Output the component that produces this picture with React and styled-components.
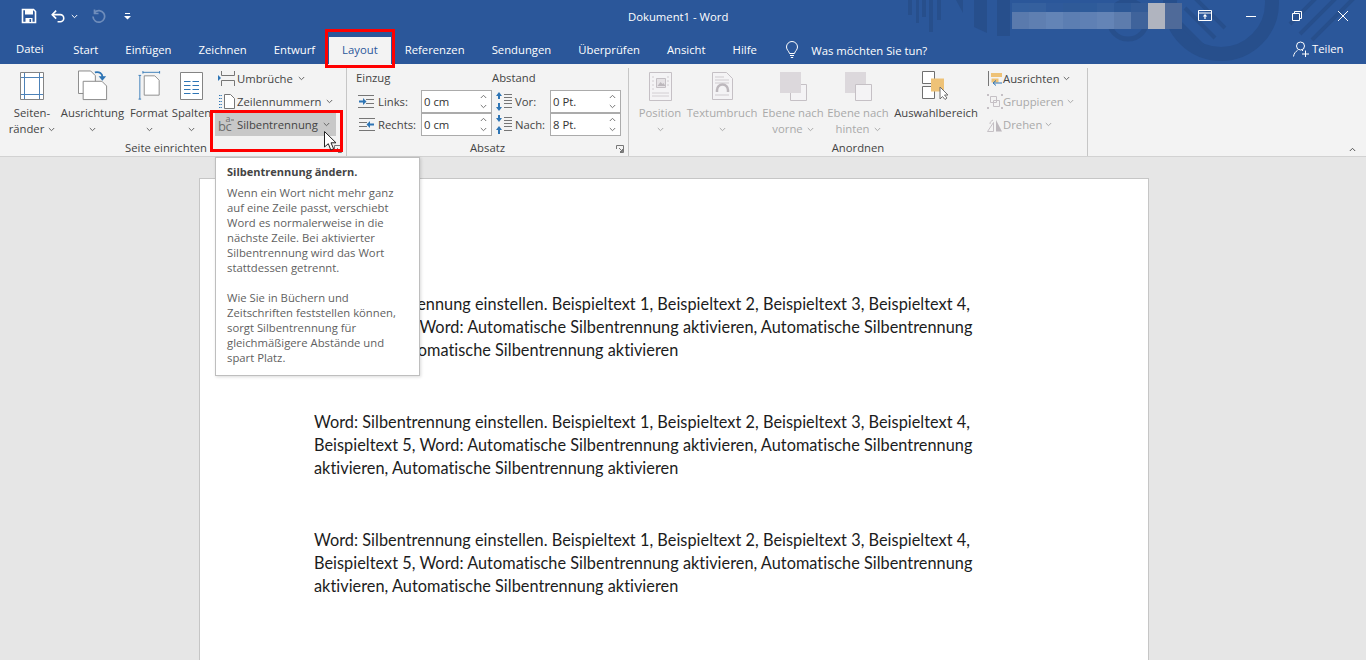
import React from "react";
import styled, { createGlobalStyle } from "styled-components";

const GlobalStyle = createGlobalStyle`
  html, body {
    margin: 0;
    height: 660px;
    overflow: hidden;
    background: #e6e6e6;
    font-family: "Open Sans", "Liberation Sans", sans-serif;
  }
  * { box-sizing: border-box; }
`;

// Small chevron used on all the dropdown buttons
const Chev = ({ color = "#666", up }) => (
  <svg width="7" height="5" viewBox="0 0 7 5" style={{ flex: "none", transform: up ? "rotate(180deg)" : "none" }}>
    <path d="M.8 1l2.7 2.7L6.2 1" fill="none" stroke={color} strokeWidth="1" />
  </svg>
);

const TitleDecor = () => (
  <DecorSvg viewBox="0 0 466 64" width="466" height="64">
    <g fill="#274f8c">
      <path d="M8 0h4v15H8zM16 0h3v23h-3zM22 0h4v17h-4zM29 0h4v32h-4zM37 0h4v20h-4z" />
      <path d="M56 0h7v13zM74 0h13v33l-13-6zM97 0h13v36H97z" />
    </g>
    <circle cx="228" cy="20" r="19" fill="none" stroke="#274f8c" strokeWidth="5" />
    <circle cx="321" cy="3" r="51" fill="none" stroke="#274f8c" strokeWidth="14" />
    <g stroke="#274f8c" strokeWidth="4">
      <path d="M275 18l28 28M285 8l30 30M295 -2l30 30M390 24l30-30M400 34l36-36M412 40l44-44" />
    </g>
  </DecorSvg>
);

const blurTiles = [
  ["#34609f", "#5a7aad"], ["#35609e", "#5f7fb1"], ["#2f5a9b", "#6384b6"], ["#2f5a98", "#5c7eb2"],
  ["#2e5b9a", "#5f80b4"], ["#335e9c", "#6484b6"], ["#2d5896", "#5d7cad"], ["#335b97", "#3f639b"],
  ["#b0b4bf", "#b0b4bf"], ["#4f6a99", "#4f6a99"],
];

const TitleBar = () => (
  <TitleRow>
    <TitleDecor />
    <Qat>
      <svg width="16" height="16" viewBox="0 0 16 16">
        <path d="M1.5 1.5h11l2 2v11h-13z" fill="none" stroke="#fff" strokeWidth="1.6" />
        <path d="M4 1.5h8v5H4zM4.5 10h7v4.5h-7z" fill="#fff" />
        <path d="M8.5 11h1.6v3H8.5z" fill="#2b579a" />
      </svg>
      <UndoWrap>
        <svg width="15" height="15" viewBox="0 0 16 15">
          <path d="M1.5 5.5h8.3a3.8 3.8 0 0 1 0 7.6H7" fill="none" stroke="#fff" strokeWidth="1.7" />
          <path d="M5.5 1.2L1.3 5.500l4.2 4.300" fill="none" stroke="#fff" strokeWidth="1.7" />
        </svg>
        <Chev color="#fff" />
      </UndoWrap>
      <RedoIcon width="15" height="15" viewBox="0 0 15 15">
        <path d="M3.500 3.500A5.800 5.800 0 1 1 2 7.500M3.500.500v4H7.500" fill="none" stroke="#6f8dbb" strokeWidth="1.700" />
      </RedoIcon>
      <svg width="7" height="7" viewBox="0 0 7 7">
        <path d="M1 0h5v1H1zM0 3h7L3.500 6.500z" fill="#fff" />
      </svg>
    </Qat>
    <DocTitle>Dokument1 - Word</DocTitle>
    <BlurStrip>
      {blurTiles.map((t, i) => (
        <BlurCol key={i}>
          <BlurTop $c={t[0]} />
          <BlurBottom $c={t[1]} />
        </BlurCol>
      ))}
    </BlurStrip>
    <WinButtons>
      <svg width="14" height="11" viewBox="0 0 14 11">
        <path d="M.5.500h13v10H.5zM.5 3h13" fill="none" stroke="#fff" />
        <path d="M7 4l2.300 2.400H7.600V9H6.400V6.400H4.700z" fill="#fff" />
      </svg>
      <svg width="10" height="10" viewBox="0 0 10 10">
        <path d="M0 5.500h10" stroke="#fff" />
      </svg>
      <svg width="10" height="10" viewBox="0 0 10 10">
        <path d="M.5 2.500h7v7h-7zM2.500 2.500v-2h7v7h-2" fill="none" stroke="#fff" />
      </svg>
      <svg width="10" height="10" viewBox="0 0 10 10">
        <path d="M0 0l10 10M10 0L0 10" stroke="#fff" />
      </svg>
    </WinButtons>
  </TitleRow>
);

const tabNames = ["Start", "Einfügen", "Zeichnen", "Entwurf"];
const tabNames2 = ["Referenzen", "Sendungen", "Überprüfen", "Ansicht", "Hilfe"];

const TabBar = () => (
  <TabRow>
    <FileTab>Datei</FileTab>
    {tabNames.map((t) => (
      <Tab key={t}>{t}</Tab>
    ))}
    <Tab $active>Layout</Tab>
    {tabNames2.map((t) => (
      <Tab key={t}>{t}</Tab>
    ))}
    <TellMe>
      <svg width="16" height="18" viewBox="0 0 16 18">
        <path d="M5.500 12.500C5 10 2.500 9 2.500 6a5.500 5.500 0 0 1 11 0c0 3-2.500 4-3 6.500zM6 14.500h4M6.800 16.500h2.400" fill="none" stroke="#fff" />
      </svg>
      Was möchten Sie tun?
    </TellMe>
    <Share>
      <svg width="16" height="16" viewBox="0 0 16 16">
        <circle cx="7.500" cy="5" r="4" fill="none" stroke="#fff" />
        <path d="M.5 15.500c.5-3 2-5 4-6M9 9.500h1M9 13h7M12.500 9.500v6.500" fill="none" stroke="#fff" />
      </svg>
      Teilen
    </Share>
  </TabRow>
);

const MarginsIcon = () => (
  <svg width="24" height="28" viewBox="0 0 24 28">
    <path d="M.5.500h23v27H.5z" fill="#fff" stroke="#848484" />
    <path d="M4.500 1v26M19.500 1v26M1 5.500h22M1 22.500h22" stroke="#4d82b8" />
  </svg>
);

const OrientationIcon = () => (
  <svg width="30" height="31" viewBox="0 0 32 32">
    <path d="M.5.500h13l5 5v19H.5z" fill="#fff" stroke="#848484" />
    <path d="M5.500 11.500h20l5 5v14.500h-25z" fill="#fff" stroke="#848484" />
    <path d="M18 2c5-1 8 1 8 5" fill="none" stroke="#2e75b5" strokeWidth="2" />
    <path d="M22 6h8l-4 5z" fill="#2e75b5" />
  </svg>
);

const SizeIcon = () => (
  <svg width="25" height="29" viewBox="0 0 25 33">
    <path d="M6.500 5.500h12l5 5v17h-17z" fill="#fff" stroke="#848484" />
    <path d="M5 1.500h19M5 0v3M24 0v3M1.500 5v27M0 5h3M0 32h3" stroke="#2e75b5" fill="none" />
  </svg>
);

const ColumnsIcon = () => (
  <svg width="23" height="28" viewBox="0 0 23 28">
    <path d="M.5.500h22v27H.5z" fill="#fff" stroke="#848484" />
    <path d="M4 9.500h6.500M12.500 9.500H19M4 13.500h6.500M12.500 13.500H19M4 17.500h6.500M12.500 17.500H19M4 21.500h6.500M12.500 21.500H19" stroke="#2e75b5" />
  </svg>
);

const BreaksIcon = () => (
  <svg width="17" height="15" viewBox="0 0 17 15">
    <path d="M3.500 0v4.500h13V0M3.500 15v-5.500h13V15" fill="none" stroke="#767676" />
    <path d="M0 4l3 3-3 3z" fill="#2e75b5" />
  </svg>
);

const LineNumbersIcon = () => (
  <svg width="17" height="15" viewBox="0 0 17 15">
    <path d="M6.500.500h6l4 4v10h-10z" fill="#fff" stroke="#767676" />
    <path d="M1 1.500h3M1 4.500h3M1 7.500h3M1 10.500h3M1 13.500h3" stroke="#2e75b5" strokeDasharray="1.500 .7" />
  </svg>
);

// The bc with a- above it, an icon made of real letters
const HyphenIcon = () => (
  <svg width="17" height="17" viewBox="0 0 17 17" fontFamily="Open Sans, sans-serif" fill="#6c6c6c">
    <text x="0" y="15" fontSize="13">b</text>
    <text x="7.500" y="15" fontSize="13">c</text>
    <text x="7.500" y="6" fontSize="9">a</text>
    <path d="M13 3.500h3v1h-3z" />
  </svg>
);

const IndentIcon = ({ right }) => (
  <svg width="17" height="14" viewBox="0 0 17 14" style={{ flex: "none", transform: right ? "scaleX(-1)" : "none" }}>
    <path d="M0 .500h16M8 4.500h8M8 8.500h8M0 12.500h16" stroke="#767676" />
    <path d="M1 5.500h4V3l3.500 3.500L5 10V7.500H1z" fill="#2e75b5" />
  </svg>
);

const SpacingIcon = ({ flip }) => (
  <svg width="17" height="20" viewBox="0 0 17 20" style={{ flex: "none" }}>
    <path d="M9 2.500h8M9 5.500h8M9 8.500h8M9 11.500h8M9 15.500h8" stroke="#767676" />
    {flip ? (
      <path d="M3 0h2v3h2L4 7 1 3h2zM3 19v-4H1l3-4 3 4H5v4z" fill="#2e75b5" />
    ) : (
      <path d="M4 0l3 4H5v3H3V4H1zM3 11h2v4h2l-3 4-3-4h2z" fill="#2e75b5" />
    )}
  </svg>
);

const PositionIcon = () => (
  <svg width="23" height="29" viewBox="0 0 23 29">
    <path d="M.5.500h22v28H.5z" fill="#f4f3f5" stroke="#c5c0c5" />
    <path d="M7.500 6.500h9v9h-9z" fill="#e6e3e6" stroke="#c5c0c5" />
    <path d="M8.500 14l3-4 2 2 1-1 2 3z" fill="#bdb8bd" />
    <path d="M3 5h2M3 9h2M3 13h2M3 17h2M3 21h17M3 24h17M18 5h2M18 9h2M18 13h2" stroke="#d2ced2" />
  </svg>
);

const WrapIcon = () => (
  <svg width="21" height="28" viewBox="0 0 21 28">
    <path d="M.5.500h14l6 6v21H.5z" fill="#f4f3f5" stroke="#c5c0c5" />
    <path d="M3 5h9M3 8h14M3 11h14M3 23h14" stroke="#cfcbcf" />
    <path d="M5 20v-2a5.500 5.500 0 0 1 11 0v2" fill="none" stroke="#bdb8bd" strokeWidth="2.500" />
  </svg>
);

const LayerIcon = ({ back }) => (
  <svg width="27" height="29" viewBox="0 0 27 29">
    {back ? (
      <>
        <path d="M0 0h21v21H0z" fill="#dcd8dc" />
        <path d="M10.500 12.500h16v16h-16z" fill="#f4f3f5" stroke="#c5c0c5" />
      </>
    ) : (
      <>
        <path d="M10.500 12.500h16v16h-16z" fill="#f4f3f5" stroke="#c5c0c5" />
        <path d="M0 0h21v21H0z" fill="#dcd8dc" />
      </>
    )}
  </svg>
);

const SelectionIcon = () => (
  <svg width="28" height="29" viewBox="0 0 28 29">
    <path d="M.5.500h12v12H.5zM.5 15.500h12v12H.5z" fill="#fff" stroke="#6f6f6f" />
    <path d="M9 7.500h13v13H9z" fill="#eec277" />
    <path d="M18 16v12l2.500-2.500 2.500 3 2-1.500-2.500-3H26z" fill="#fff" stroke="#6f6f6f" />
  </svg>
);

const AlignIcon = () => (
  <svg width="15" height="15" viewBox="0 0 15 15">
    <path d="M.5 0v15" stroke="#767676" />
    <path d="M3 2h11v4H3z" fill="#eec277" />
    <path d="M3.500 7.500h7v4h-7z" fill="#eec277" />
    <path d="M14 12H6M8 9.500L5 12l3 2.500" fill="none" stroke="#2e75b5" />
  </svg>
);

const GroupIcon = () => (
  <svg width="16" height="15" viewBox="0 0 16 15">
    <path d="M3.500 2.500h6v6h-6zM6.500 6.500h6v6h-6z" fill="none" stroke="#c5c0c5" />
    <path d="M0 0h2v2H0zM14 0h2v2h-2zM0 13h2v2H0zM14 13h2v2h-2z" fill="#c5c0c5" />
  </svg>
);

const RotateIcon = () => (
  <svg width="16" height="14" viewBox="0 0 16 14">
    <path d="M.5 13.500l6-9v9z" fill="none" stroke="#c5c0c5" />
    <path d="M9 2l6 11.500H9z" fill="#bdb8bd" />
    <path d="M3 6c0-2 1-3 3-4" fill="none" stroke="#c5c0c5" />
  </svg>
);

const Launcher = () => (
  <LauncherIcon width="8" height="8" viewBox="0 0 8 8">
    <path d="M.5 4V.5H7.500v7H4M3 3l3.500 3.500M6.500 4v2.500H4" fill="none" stroke="#777" />
  </LauncherIcon>
);

const Spinner = ({ value }) => (
  <SpinBox>
    <SpinValue>{value}</SpinValue>
    <SpinArrows>
      <Chev color="#777" up />
      <Chev color="#777" />
    </SpinArrows>
  </SpinBox>
);

const Ribbon = () => (
  <RibbonRow>
    <Group $width={347}>
      <GroupBody $left={5}>
        <BigButton $width={54}>
          <IconSlot $top={4}><MarginsIcon /></IconSlot>
          <BigLabel>Seiten-</BigLabel>
          <BigLabel>ränder <Chev /></BigLabel>
        </BigButton>
        <BigButton $width={67}>
          <IconSlot $top={2}><OrientationIcon /></IconSlot>
          <BigLabel>Ausrichtung</BigLabel>
          <BigLabel><Chev /></BigLabel>
        </BigButton>
        <BigButton $width={46}>
          <IconSlot $top={3}><SizeIcon /></IconSlot>
          <BigLabel>Format</BigLabel>
          <BigLabel><Chev /></BigLabel>
        </BigButton>
        <BigButton $width={39}>
          <IconSlot $top={4}><ColumnsIcon /></IconSlot>
          <BigLabel>Spalten</BigLabel>
          <BigLabel><Chev /></BigLabel>
        </BigButton>
        <SmallColumn $left={4}>
          <SmallButton $width={120} $gap={2}><BreaksIcon />Umbrüche <Chev /></SmallButton>
          <SmallButton $width={120} $gap={2}><LineNumbersIcon />Zeilennummern <Chev /></SmallButton>
          <SmallButton $width={121} $gap={2} $hover><HyphenIcon />Silbentrennung <Chev /></SmallButton>
        </SmallColumn>
      </GroupBody>
      <GroupLabel $shift={-7}>Seite einrichten</GroupLabel>
      <Launcher />
    </Group>

    <Group $width={282}>
      <ParaBody>
        <ParaColumn $width={136}>
          <ParaHead>Einzug</ParaHead>
          <ParaRow $left={2}>
            <IndentIcon /><ParaLabel $width={40}>Links:</ParaLabel>
            <Spinner value="0 cm" />
          </ParaRow>
          <ParaRow $left={2}>
            <IndentIcon right /><ParaLabel $width={40}>Rechts:</ParaLabel>
            <Spinner value="0 cm" />
          </ParaRow>
        </ParaColumn>
        <ParaColumn $width={129}>
          <ParaHead>Abstand</ParaHead>
          <ParaRow $left={3}>
            <SpacingIcon /><ParaLabel $width={32}>Vor:</ParaLabel>
            <Spinner value="0 Pt." />
          </ParaRow>
          <ParaRow $left={3}>
            <SpacingIcon flip /><ParaLabel $width={32}>Nach:</ParaLabel>
            <Spinner value="8 Pt." />
          </ParaRow>
        </ParaColumn>
      </ParaBody>
      <GroupLabel>Absatz</GroupLabel>
      <Launcher />
    </Group>

    <Group $width={459}>
      <GroupBody $left={7}>
        <BigButton $width={48} $disabled>
          <IconSlot $top={4}><PositionIcon /></IconSlot>
          <BigLabel>Position</BigLabel>
          <BigLabel><Chev color="#aaa" /></BigLabel>
        </BigButton>
        <BigButton $width={76} $disabled>
          <IconSlot $top={4}><WrapIcon /></IconSlot>
          <BigLabel>Textumbruch</BigLabel>
          <BigLabel><Chev color="#aaa" /></BigLabel>
        </BigButton>
        <BigButton $width={66} $disabled>
          <IconSlot $top={4}><LayerIcon /></IconSlot>
          <BigLabel>Ebene nach</BigLabel>
          <BigLabel>vorne <Chev color="#aaa" /></BigLabel>
        </BigButton>
        <BigButton $width={64} $disabled>
          <IconSlot $top={4}><LayerIcon back /></IconSlot>
          <BigLabel>Ebene nach</BigLabel>
          <BigLabel>hinten <Chev color="#aaa" /></BigLabel>
        </BigButton>
        <BigButton $width={92}>
          <IconSlot $top={3}><SelectionIcon /></IconSlot>
          <BigLabel>Auswahlbereich</BigLabel>
        </BigButton>
        <SmallColumn $left={2}>
          <SmallButton $width={94} $gap={0}><IconCell><AlignIcon /></IconCell>Ausrichten <Chev /></SmallButton>
          <SmallButton $width={94} $gap={0} $disabled><IconCell><GroupIcon /></IconCell>Gruppieren <Chev color="#aaa" /></SmallButton>
          <SmallButton $width={94} $gap={0} $disabled><IconCell><RotateIcon /></IconCell>Drehen <Chev color="#aaa" /></SmallButton>
        </SmallColumn>
      </GroupBody>
      <GroupLabel>Anordnen</GroupLabel>
    </Group>
    <Collapse><Chev color="#555" up /></Collapse>
  </RibbonRow>
);

const paragraphLines = [
  "Word: Silbentrennung einstellen. Beispieltext 1, Beispieltext 2, Beispieltext 3, Beispieltext 4,",
  "Beispieltext 5, Word: Automatische Silbentrennung aktivieren, Automatische Silbentrennung",
  "aktivieren, Automatische Silbentrennung aktivieren",
];

const tooltipParts = [
  ["Wenn ein Wort nicht mehr ganz", "auf eine Zeile passt, verschiebt", "Word es normalerweise in die", "nächste Zeile. Bei aktivierter", "Silbentrennung wird das Wort", "stattdessen getrennt."],
  ["Wie Sie in Büchern und", "Zeitschriften feststellen können,", "sorgt Silbentrennung für", "gleichmäßigere Abstände und", "spart Platz."],
];

export default function App() {
  return (
    <>
      <GlobalStyle />
      <Window>
        <Header>
          <TitleBar />
          <TabBar />
        </Header>
        <Ribbon />
        <Canvas>
          <Page>
            {[0, 1, 2].map((p) => (
              <Paragraph key={p}>
                {paragraphLines.map((l) => (
                  <div key={l}>{l}</div>
                ))}
              </Paragraph>
            ))}
          </Page>
        </Canvas>

        <Tooltip>
          <TooltipTitle>Silbentrennung ändern.</TooltipTitle>
          {tooltipParts.map((part, i) => (
            <TooltipPart key={i}>
              {part.map((l) => (
                <div key={l}>{l}</div>
              ))}
            </TooltipPart>
          ))}
        </Tooltip>

        <RedBox $left={325} $top={29} $width={70} $height={39} />
        <RedBox $left={210} $top={110} $width={133} $height={42} />

        <Cursor width="14" height="20" viewBox="0 0 14 20">
          <path d="M.5.500v15.500l3.800-3.300 2.500 6.300 2.800-1.200-2.600-6h5z" fill="#fff" stroke="#222" />
        </Cursor>
      </Window>
    </>
  );
}

const Window = styled.div`
  position: relative;
  width: 1366px;
  height: 660px;
  overflow: hidden;
  display: flex;
  flex-direction: column;
`;

const Header = styled.div`
  position: relative;
  background: #2b579a;
  height: 64px;
  color: #fff;
  font-size: 11.3px;
  flex: none;
`;

const DecorSvg = styled.svg`
  position: absolute;
  top: 0;
  left: 900px;
`;

const TitleRow = styled.div`
  position: relative;
  height: 37px;
  display: flex;
  align-items: center;
`;

const Qat = styled.div`
  display: flex;
  align-items: center;
  padding: 0 0 5px 21px;
  gap: 14px;
  width: 300px;
`;

const UndoWrap = styled.div`
  display: flex;
  align-items: center;
  gap: 5px;
`;

const RedoIcon = styled.svg`
  margin-left: -1px;
  margin-right: 4px;
`;

const DocTitle = styled.div`
  position: absolute;
  left: 628px;
  top: 9px;
  line-height: 16px;
  white-space: nowrap;
`;

const BlurStrip = styled.div`
  position: absolute;
  left: 1012px;
  top: 3px;
  height: 26px;
  display: flex;
`;

const BlurCol = styled.div`
  width: 17px;
  display: flex;
  flex-direction: column;
`;

const BlurTop = styled.div`
  height: 9px;
  background: ${(p) => p.$c};
`;

const BlurBottom = styled.div`
  height: 17px;
  background: ${(p) => p.$c};
`;

const WinButtons = styled.div`
  position: absolute;
  left: 1198px;
  top: 10px;
  display: flex;
  align-items: center;
  gap: 36px;
  height: 11px;
  svg:first-child {
    margin-right: -2px;
  }
`;

const TabRow = styled.div`
  position: relative;
  height: 27px;
  display: flex;
  align-items: stretch;
`;

const Tab = styled.div`
  padding: 0 13.5px;
  line-height: 26px;
  white-space: nowrap;
  background: ${(p) => (p.$active ? "#f3f3f3" : "transparent")};
  color: ${(p) => (p.$active ? "#2b579a" : "#fff")};
`;

const FileTab = styled(Tab)`
  padding: 0 16px 0 16px;
  margin-top: -1px;
`;

const TellMe = styled.div`
  display: flex;
  align-items: center;
  gap: 11px;
  margin-left: 14px;
  padding-bottom: 1px;
  white-space: nowrap;
`;

const Share = styled.div`
  position: absolute;
  left: 1293px;
  top: 3px;
  display: flex;
  align-items: center;
  gap: 3px;
  line-height: 18px;
`;

const RibbonRow = styled.div`
  position: relative;
  height: 93px;
  flex: none;
  display: flex;
  background: #f3f3f3;
  border-bottom: 1px solid #d2d2d2;
  color: #444;
  font-size: 11.3px;
`;

const Group = styled.div`
  position: relative;
  width: ${(p) => p.$width}px;
  height: 88px;
  margin-top: 4px;
  display: flex;
  flex-direction: column;
  border-right: 1px solid #c6c6c6;
`;

const GroupBody = styled.div`
  flex: 1;
  display: flex;
  padding-left: ${(p) => p.$left}px;
`;

const GroupLabel = styled.div`
  text-align: center;
  line-height: 16px;
  height: 16px;
  transform: translateX(${(p) => p.$shift || 0}px);
`;

const LauncherIcon = styled.svg`
  position: absolute;
  right: 4px;
  bottom: 3px;
`;

const BigButton = styled.div`
  width: ${(p) => p.$width}px;
  flex: none;
  display: flex;
  flex-direction: column;
  align-items: center;
  color: ${(p) => (p.$disabled ? "#a9a9a9" : "#444")};
`;

const IconSlot = styled.div`
  height: 37px;
  padding-top: ${(p) => p.$top}px;
  display: flex;
  align-items: flex-start;
  justify-content: center;
`;

const BigLabel = styled.div`
  line-height: 16px;
  height: 16px;
  display: flex;
  align-items: center;
  gap: 4px;
  white-space: nowrap;
`;

const SmallColumn = styled.div`
  display: flex;
  flex-direction: column;
  margin-left: ${(p) => p.$left || 0}px;
  margin-top: -1px;
`;

const SmallButton = styled.div`
  width: ${(p) => p.$width}px;
  height: 23px;
  display: flex;
  align-items: center;
  gap: ${(p) => p.$gap}px;
  white-space: nowrap;
  padding-left: 3px;
  color: ${(p) => (p.$disabled ? "#a9a9a9" : "#444")};
  background: ${(p) => (p.$hover ? "#c8c8c8" : "transparent")};
  & > svg:last-child {
    margin-left: 3px;
  }
`;

const IconCell = styled.div`
  width: 16px;
  display: flex;
  justify-content: center;
`;

const ParaBody = styled.div`
  flex: 1;
  display: flex;
  padding-left: 9px;
`;

const ParaColumn = styled.div`
  width: ${(p) => p.$width}px;
  display: flex;
  flex-direction: column;
`;

const ParaHead = styled.div`
  height: 22px;
  line-height: 20px;
`;

const ParaRow = styled.div`
  height: 23px;
  display: flex;
  align-items: center;
  gap: 3px;
  padding-left: ${(p) => p.$left}px;
`;

const ParaLabel = styled.div`
  width: ${(p) => p.$width}px;
  flex: none;
  white-space: nowrap;
`;

const SpinBox = styled.div`
  width: 71px;
  height: 23px;
  margin-bottom: 1px;
  border: 1px solid #ababab;
  background: #fff;
  display: flex;
  align-items: center;
  justify-content: space-between;
  padding: 0 4px 0 2px;
  flex: none;
`;

const SpinValue = styled.div`
  color: #333;
`;

const SpinArrows = styled.div`
  display: flex;
  flex-direction: column;
  gap: 5px;
`;

const Collapse = styled.div`
  position: absolute;
  left: 1349px;
  top: 83px;
  display: flex;
`;

const Canvas = styled.div`
  flex: 1;
  background: #e6e6e6;
  padding: 21px 0 0 199px;
`;

const Page = styled.div`
  width: 950px;
  height: 600px;
  background: #fff;
  border: 1px solid #c6c6c6;
  padding: 113px 0 0 114px;
`;

const Paragraph = styled.div`
  font-family: Lato, "Open Sans", sans-serif;
  font-size: 16.3px;
  letter-spacing: 0.03px;
  line-height: 23px;
  color: #1c1c1c;
  white-space: nowrap;
  margin-bottom: 49px;
`;

const Tooltip = styled.div`
  position: absolute;
  left: 215px;
  top: 157px;
  width: 205px;
  height: 219px;
  background: #fff;
  border: 1px solid #bebebe;
  box-shadow: 1px 1px 3px rgba(0, 0, 0, 0.15);
  padding: 6px 0 0 11px;
  font-size: 11.3px;
  line-height: 15px;
  color: #5f5f5f;
  white-space: nowrap;
`;

const TooltipTitle = styled.div`
  font-size: 11px;
  font-weight: 700;
  color: #444;
  margin-bottom: 6px;
`;

const TooltipPart = styled.div`
  margin-bottom: 15px;
`;

const RedBox = styled.div`
  position: absolute;
  left: ${(p) => p.$left}px;
  top: ${(p) => p.$top}px;
  width: ${(p) => p.$width}px;
  height: ${(p) => p.$height}px;
  border: 3px solid #f00;
`;

const Cursor = styled.svg`
  position: absolute;
  left: 324px;
  top: 131px;
`;
